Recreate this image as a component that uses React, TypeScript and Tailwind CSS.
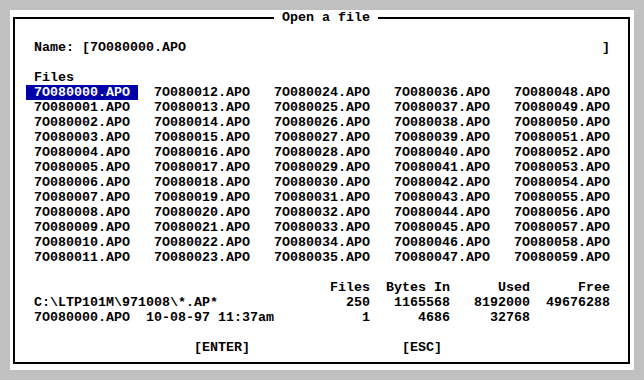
const files = Array.from({ length: 60 }, (_, i) => `7O08${String(i).padStart(4, "0")}.APO`);

export default function App() {
  return (
    <div className="w-[644px] h-[380px] bg-[#c0c0c0] p-[10px] font-['Liberation_Mono',monospace] text-[13.333px] leading-[15px] font-bold text-black whitespace-pre">
      <div className="w-[624px] h-[360px] bg-white pl-[3px] pt-[7px]">
        <div className="relative w-[617px] h-[347px] border-2 border-black">
          {/* title sits on the top border line */}
          <span className="absolute left-[259px] top-[-9px] h-[15px] bg-white px-[8px]">Open a file</span>

          <div className="flex flex-col pt-[21px]">
            <div className="flex w-[576px] justify-between ml-[19px]">
              <span>Name: [7O080000.APO</span>
              <span>]</span>
            </div>

            <div className="mt-[15px] ml-[19px]">Files</div>

            <div className="grid grid-flow-col grid-rows-[repeat(12,15px)] grid-cols-[repeat(5,120px)] ml-[11px]">
              {files.map((f, i) => (
                <span
                  key={f}
                  className={
                    i === 0
                      ? "w-fit px-[8px] bg-[#0000a8] text-white"
                      : "w-fit px-[8px]"
                  }
                >
                  {f}
                </span>
              ))}
            </div>

            <div className="grid grid-cols-[256px_80px_80px_80px_80px] mt-[15px] ml-[19px]">
              <span></span>
              <span className="text-right">Files</span>
              <span className="text-right">Bytes In</span>
              <span className="text-right">Used</span>
              <span className="text-right">Free</span>

              <span>C:\LTP101M\971008\*.AP*</span>
              <span className="text-right">250</span>
              <span className="text-right">1165568</span>
              <span className="text-right">8192000</span>
              <span className="text-right">49676288</span>

              <span>7O080000.APO  10-08-97 11:37am</span>
              <span className="text-right">1</span>
              <span className="text-right">4686</span>
              <span className="text-right">32768</span>
              <span></span>
            </div>

            <div className="flex gap-[152px] mt-[15px] ml-[179px]">
              <span>[ENTER]</span>
              <span>[ESC]</span>
            </div>
          </div>
        </div>
      </div>
    </div>
  );
}
